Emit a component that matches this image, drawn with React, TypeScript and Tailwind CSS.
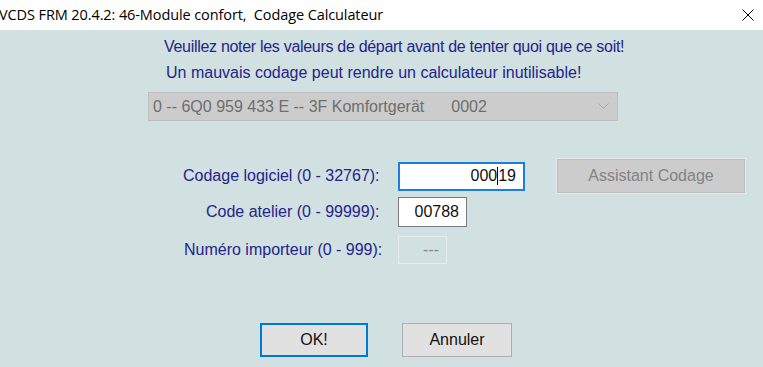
const FONT = "font-['Liberation_Sans',Arial,sans-serif]";

const TextField = ({
  value,
  width,
  variant,
}: {
  value: string;
  width: string;
  variant: "focus" | "normal" | "disabled";
}) => {
  const box =
    variant === "focus"
      ? "border-2 border-[#1a7fdc] bg-white text-[#111]"
      : variant === "normal"
        ? "border border-[#7a7a7a] bg-white text-[#111]"
        : "border border-[#e6eded] bg-transparent text-[#8a8a8a]";
  return (
    <div className={`${width} ${box} flex items-center justify-end pr-[7px] h-full`}>
      {variant === "focus" ? (
        <span className="flex items-center">
          000
          <span className="inline-block w-px h-[18px] bg-black" />
          19
        </span>
      ) : (
        value
      )}
    </div>
  );
};

export default function App() {
  return (
    <div className={`w-[763px] h-[367px] overflow-hidden flex flex-col ${FONT}`}>
      <div className="h-[30px] bg-white flex items-center justify-between shrink-0">
        <span className="font-['Open_Sans','Noto_Sans',sans-serif] text-[14.5px] text-black -ml-[1px] tracking-[-0.1px]">
          VCDS FRM 20.4.2: 46-Module confort,&nbsp; Codage Calculateur
        </span>
        <svg width="12" height="12" viewBox="0 0 12 12" className="mr-[9px]">
          <path d="M0.5 0.5 L11.5 11.5 M11.5 0.5 L0.5 11.5" stroke="#000" strokeWidth="1" />
        </svg>
      </div>

      <div className="flex-1 bg-[#d1e0e0] flex flex-col text-[16px]">
        <div className="mt-[7px] ml-[164px] h-[20px] leading-[20px] text-[#24248c] tracking-[-0.3px]">
          Veuillez noter les valeurs de départ avant de tenter quoi que ce soit!
        </div>
        <div className="mt-[6px] ml-[166px] h-[20px] leading-[20px] text-[#24248c]">
          Un mauvais codage peut rendre un calculateur inutilisable!
        </div>

        <div className="mt-[9px] ml-[148px] w-[470px] h-[29px] bg-[#cccccc] border border-[#bfbfbf] flex items-center justify-between pl-[4px] pr-[8px] text-[#6e6e6e]">
          <span className="flex">
            <span>0 -- 6Q0 959 433 E -- 3F Komfortgerät</span>
            <span className="ml-[27px]">0002</span>
          </span>
          <svg width="11" height="7" viewBox="0 0 11 7">
            <path d="M0.5 0.5 L5.5 5.5 L10.5 0.5" fill="none" stroke="#a8a8a8" strokeWidth="1" />
          </svg>
        </div>

        <div className="mt-[38px] flex items-center h-[34px]">
          <div className="w-[398px] pl-[183px] text-[#24248c]">Codage logiciel (0 - 32767):</div>
          <div className="h-[29px]">
            <TextField value="00019" width="w-[127px]" variant="focus" />
          </div>
          <div className="ml-[32px] w-[188px] h-[34px] bg-[#cccccc] border border-[#bfbfbf] outline outline-1 outline-[#e4eaea] flex items-center justify-center text-[#838383]">
            Assistant Codage
          </div>
        </div>

        <div className="mt-[4px] flex items-center h-[30px]">
          <div className="w-[398px] pl-[206px] text-[#24248c]">Code atelier (0 - 99999):</div>
          <div className="h-[30px]">
            <TextField value="00788" width="w-[69px]" variant="normal" />
          </div>
        </div>

        <div className="mt-[9px] flex items-center h-[28px]">
          <div className="w-[398px] pl-[184px] text-[#24248c]">Numéro importeur (0 - 999):</div>
          <div className="h-[28px]">
            <TextField value="---" width="w-[49px]" variant="disabled" />
          </div>
        </div>

        <div className="mt-[59px] flex h-[34px]">
          <div className="ml-[260px] w-[108px] h-[34px] bg-[#e1e1e1] border-2 border-[#0078d7] flex items-center justify-center text-[#111]">
            OK!
          </div>
          <div className="ml-[34px] w-[110px] h-[34px] bg-[#e1e1e1] border border-[#adadad] flex items-center justify-center text-[#111]">
            Annuler
          </div>
        </div>
      </div>
    </div>
  );
}
